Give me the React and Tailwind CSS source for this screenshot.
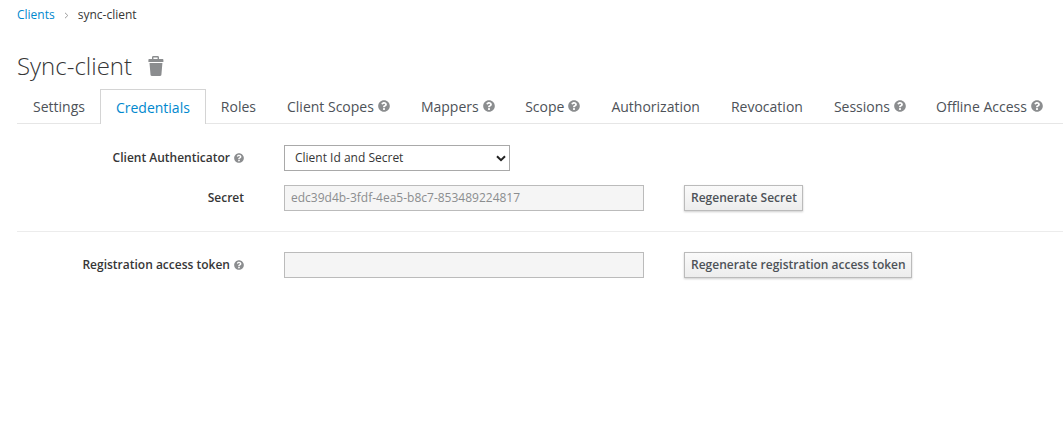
import React from "react";
import { FaQuestionCircle } from "react-icons/fa";

const tabs = [
  ["Settings", false, "-ml-[0px] -mr-[1px]"],
  ["Credentials", false, ""],
  ["Roles", false, "-ml-[1px] -mr-[0.5px]"],
  ["Client Scopes", true, "-mx-[0.5px]"],
  ["Mappers", true, "-ml-[0.5px] -mr-[1px]"],
  ["Scope", true, "-mx-[0.5px]"],
  ["Authorization", false, "-mx-[0.5px]"],
  ["Revocation", false, "-mx-[0.5px]"],
  ["Sessions", true, "-ml-[0.5px] -mr-[1.5px]"],
  ["Offline Access", true, "-mx-[0.5px]"],
];

function Help({ small }) {
  return <FaQuestionCircle className={small ? "text-[#8b8d8f] w-[10px] h-[10px] ml-[4px] shrink-0" : "text-[#8b8d8f] w-[12px] h-[12px] ml-[4px] shrink-0"} />;
}

function Label({ children, help }) {
  return (
    <div className="w-[227px] flex items-center justify-end text-[12px] font-semibold text-[#363636]">
      {children}
      {help ? <Help small /> : null}
    </div>
  );
}

export default function App() {
  return (
    <div className="w-[1063px] h-[432px] bg-white overflow-hidden pl-[17px] text-[#363636]" style={{ fontFamily: '"Open Sans", sans-serif' }}>
      <nav className="flex items-center h-[30px] text-[12px]">
        <span className="text-[#0088ce]">Clients</span>
        <svg className="w-[5px] h-[7px] ml-[9px] mr-[9px] text-[#9c9c9c]" viewBox="0 0 5 7" fill="none" stroke="currentColor" strokeWidth="1"><path d="M1 .8 3.8 3.5 1 6.2" /></svg>
        <span>sync-client</span>
      </nav>
      <div className="flex items-center h-[59px] pt-[13px]">
        <h1 className="text-[24px] font-light leading-[36px]">Sync-client</h1>
        <svg className="w-[16px] h-[20px] ml-[16px] text-[#8b8d8f]" viewBox="0 0 16 20" fill="currentColor">
          <path fillRule="evenodd" d="M4 3V1.4C4 .6 4.6 0 5.4 0h4.2C10.4 0 11 .6 11 1.4V3h3.4c.6 0 1 .4 1 1v2H.4V4c0-.6.4-1 1-1H4Zm1.4 0h4.2V1.4H5.4V3Z" />
          <path d="M1.5 7h12.9l-1 11.8c0 .7-.6 1.2-1.2 1.2H3.7c-.6 0-1.2-.5-1.2-1.2L1.5 7Z" />
        </svg>
      </div>
      <div className="flex h-[35px] border-b border-[#e6e6e6]">
        {tabs.map(([t, h, m], i) =>
          i === 1 ? (
            <div key={t} className="pl-[15px] pr-[15px] border border-b-0 border-[#d4d4d4] bg-white h-[35px] flex items-center text-[14px] text-[#0088ce]">{t}</div>
          ) : (
            <div key={t} className={`px-[16px] h-[34px] flex items-center text-[14px] text-[#4d5258] ${m}`}>
              {t}
              {h ? <Help /> : null}
            </div>
          )
        )}
      </div>
      <div className="flex flex-col pt-[21px]">
        <div className="flex items-center h-[26px]">
          <Label help>Client Authenticator</Label>
          <div className="ml-[40px] w-[226px] h-[26px] border border-[#a9a9a9] bg-white flex items-center justify-between pl-[10px] pr-[3px] text-[12px]">
            <span>Client Id and Secret</span>
            <svg className="w-[10px] h-[7px] text-[#222]" viewBox="0 0 10 7" fill="none" stroke="currentColor" strokeWidth="2"><path d="M1 1.2 5 5.2 9 1.2" /></svg>
          </div>
        </div>
        <div className="flex items-center h-[26px] mt-[14px]">
          <Label>Secret</Label>
          <div className="ml-[40px] w-[360px] h-[26px] border border-[#bbb] bg-[#f5f5f5] flex items-center pl-[6px] text-[12px] text-[#8b8d8f]">edc39d4b-3fdf-4ea5-b8c7-853489224817</div>
          <button className="ml-[40px] h-[26px] pl-[6px] pr-[5px] border border-[#bbb] bg-gradient-to-b from-[#fafafa] to-[#ededed] shadow-[0_1px_2px_rgba(0,0,0,0.2)] text-[12px] font-semibold text-[#4d5258]">Regenerate Secret</button>
        </div>
        <div className="h-px bg-[#ececec] mt-[20px]" />
        <div className="flex items-center h-[26px] mt-[20px]">
          <Label help>Registration access token</Label>
          <div className="ml-[40px] w-[360px] h-[26px] border border-[#bbb] bg-[#f5f5f5]" />
          <button className="ml-[40px] h-[26px] pl-[6px] pr-[5px] border border-[#bbb] bg-gradient-to-b from-[#fafafa] to-[#ededed] shadow-[0_1px_2px_rgba(0,0,0,0.2)] text-[12px] font-semibold text-[#4d5258]">Regenerate registration access token</button>
        </div>
      </div>
    </div>
  );
}
